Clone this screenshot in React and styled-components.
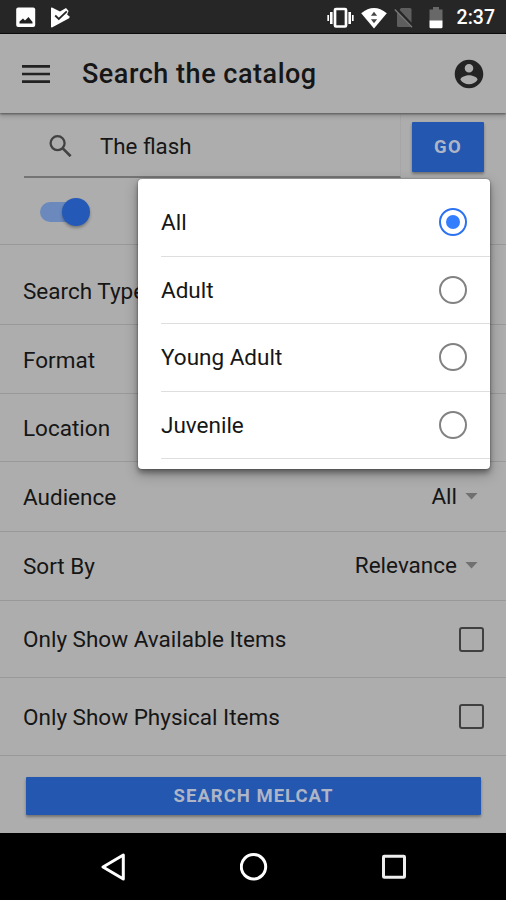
import React from "react";
import styled, { createGlobalStyle } from "styled-components";

const GlobalStyle = createGlobalStyle`
  * { box-sizing: border-box; }
  html, body { margin: 0; padding: 0; background: #000; overflow: hidden; }
  svg { display: block; flex: none; }
  button { font: inherit; border: 0; padding: 0; }
`;

const Screen = styled.div`
  position: relative;
  width: 506px;
  height: 900px;
  display: flex;
  flex-direction: column;
  background: #adadad;
  color: #161616;
  font-family: Roboto, "Liberation Sans", sans-serif;
  overflow: hidden;
`;

const StatusBar = styled.div`
  flex: none;
  height: 34px;
  display: flex;
  align-items: center;
  justify-content: space-between;
  background: #262626;
  border-bottom: 1px solid #080808;
  padding: 2px 11px 0 15px;
`;

const StatusGroup = styled.div`
  display: flex;
  align-items: center;
  gap: ${(p) => p.$gap}px;
`;

const Clock = styled.span`
  color: #fff;
  font-size: 19.5px;
  line-height: 22px;
  font-weight: 500;
  padding-top: 1px;
`;

const Header = styled.header`
  position: relative;
  flex: none;
  height: 79px;
  display: flex;
  align-items: center;
  padding: 0 22px 0 22px;
  background: #adadad;
  box-shadow: 0 1px 2px #555, 0 3px 5px rgba(0, 0, 0, 0.18);
`;

const Title = styled.h1`
  flex: 1;
  margin: 1px 0 0 32px;
  font-size: 27px;
  line-height: 34px;
  font-weight: 500;
  letter-spacing: 0.52px;
`;

const SearchRow = styled.div`
  flex: none;
  height: 65px;
  display: flex;
  align-items: flex-start;
  justify-content: space-between;
  padding: 0 22px 0 24px;
`;

const SearchField = styled.div`
  width: 377px;
  height: 65px;
  display: flex;
  align-items: center;
  gap: 28px;
  padding: 2px 0 0 25px;
  border-bottom: 2px solid #747474;
  border-right: 1px solid #a6a6a6;
`;

const Label = styled.span`
  font-size: ${(p) => p.$size || 22.5}px;
  line-height: 28px;
  letter-spacing: 0;
  white-space: nowrap;
`;

const ActionButton = styled.button`
  flex: none;
  width: ${(p) => p.$width}px;
  height: ${(p) => p.$height}px;
  margin-top: ${(p) => p.$top}px;
  background: #2457b0;
  color: #adb5c6;
  font-size: 18.5px;
  line-height: 24px;
  font-weight: 700;
  letter-spacing: ${(p) => p.$spacing}px;
  border-radius: 1px;
  box-shadow: 0 2px 3px rgba(0, 0, 0, 0.35);
`;

const ToggleRow = styled.div`
  flex: none;
  height: 67px;
  padding: 24px 0 0 40px;
  border-bottom: 1px solid #999;
`;

const ToggleTrack = styled.div`
  width: 50px;
  height: 20px;
  display: flex;
  align-items: center;
  justify-content: flex-end;
  border-radius: 10px;
  background: linear-gradient(90deg, #6b89bd 40px, transparent 40px);
`;

const ToggleKnob = styled.div`
  flex: none;
  width: 28px;
  height: 28px;
  border-radius: 50%;
  background: #2459b8;
  box-shadow: 0 2px 3px rgba(0, 0, 0, 0.3);
`;

const OptionRow = styled.div`
  flex: none;
  height: ${(p) => p.$height}px;
  display: flex;
  align-items: center;
  justify-content: space-between;
  padding: ${(p) => p.$top || 0}px 22px 0 23px;
  border-bottom: 1px solid #999;
`;

const SelectValue = styled.div`
  display: flex;
  align-items: center;
  gap: 8px;
  padding-right: 6px;
  margin-top: -2px;
`;

const Caret = styled.i`
  width: 13px;
  height: 7px;
  background: #707070;
  clip-path: polygon(0 0, 100% 0, 50% 100%);
`;

const Checkbox = styled.div`
  width: 25px;
  height: 25px;
  border: 2px solid #404040;
  border-radius: 3px;
`;

const Footer = styled.div`
  flex: 1;
  display: flex;
  justify-content: center;
  align-items: flex-start;
  padding-left: 1px;
`;

const NavBar = styled.nav`
  flex: none;
  height: 67px;
  display: flex;
  align-items: center;
  justify-content: space-between;
  padding: 0 98px 0 99px;
  background: #000;
`;

const Menu = styled.div`
  position: absolute;
  left: 138px;
  top: 179px;
  width: 352px;
  height: 290px;
  padding: 10px 0 0 23px;
  border-radius: 4px;
  background: #fff;
  box-shadow: 0 0 2px rgba(0, 0, 0, 0.4), 0 4px 5px rgba(0, 0, 0, 0.3), 0 5px 14px rgba(0, 0, 0, 0.28);
`;

const MenuItem = styled.div`
  height: 67.5px;
  display: flex;
  align-items: center;
  justify-content: space-between;
  padding-right: 23px;
  border-bottom: 1.5px solid #dedede;
`;

const Radio = styled.div`
  width: 28px;
  height: 28px;
  display: flex;
  align-items: center;
  justify-content: center;
  border: 2px solid ${(p) => (p.$checked ? "#2b72f2" : "#828282")};
  border-radius: 50%;

  &::after {
    content: "";
    width: 14px;
    height: 14px;
    border-radius: 50%;
    background: ${(p) => (p.$checked ? "#327eff" : "transparent")};
  }
`;

const PictureIcon = () => (
  <svg width="21" height="21" viewBox="0 0 21 21">
    <rect x="1.2" y=".5" width="19" height="19.5" rx="2" fill="#fff" />
    <path d="M4.500 16.500V14.500L8 11.500l2 2L13.500 10l4 5v1.500z" fill="#222" />
  </svg>
);

const PlayCheckIcon = () => (
  <svg width="21" height="21" viewBox="0 0 21 21">
    <path d="M1 1.2Q1 .2 2 .6L10 4.6 16 1l2.600 3-1.500 3.600 2.700 2.200-.7 1.500L2.400 20.300Q1 21 1 19.500z" fill="#fff" />
    <path d="M5.200 8.500l3.600 3.500 8-7.600" fill="none" stroke="#262626" strokeWidth="1.800" />
  </svg>
);

const VibrateIcon = () => (
  <svg width="27" height="22" viewBox="0 0 27 22">
    <rect x="8" y="2" width="11" height="17.500" rx="1" fill="none" stroke="#fff" strokeWidth="2.700" />
    <path d="M4.300 5v12M22.700 5v12" stroke="#fff" strokeWidth="2.600" />
    <path d="M1.200 8v6M25.800 8v6" stroke="#fff" strokeWidth="1.700" />
  </svg>
);

const WifiIcon = () => (
  <svg width="26" height="22" viewBox="0 0 26 22">
    <path d="M.2 6.200Q13-4.400 25.800 6.200L13 21.500z" fill="#fff" />
    <path d="M13 4.800l3.100 4H9.900zM13 16.300l3.100-4H9.900z" fill="#444" />
  </svg>
);

const NoSimIcon = () => (
  <svg width="20" height="21" viewBox="0 0 20 21">
    <path d="M7 1h9q1.500 0 1.500 1.500v16q0 1.500-1.500 1.500H4.500Q3 20 3 18.500V6z" fill="#5e5e5e" />
    <path d="M1.800 1.500l17.500 18.500" stroke="#262626" strokeWidth="3.400" />
    <path d="M.8 2.600L18 20.200" stroke="#777" strokeWidth="1.500" />
  </svg>
);

const BatteryIcon = () => (
  <svg width="14" height="22" viewBox="0 0 14 22">
    <path d="M4 0h6v2.500h3.500V14H.5V2.500H4z" fill="#686868" />
    <path d="M.5 13.500h13V20q0 1.300-1.300 1.300H1.800Q.5 21.300.5 20z" fill="#fff" />
  </svg>
);

const MenuIcon = () => (
  <svg width="28" height="20" viewBox="0 0 28 20">
    <path d="M0 2.300h28M0 10h28M0 17.700h28" stroke="#222" strokeWidth="2.700" />
  </svg>
);

const AccountIcon = () => (
  <svg width="30" height="30" viewBox="1.5 1.5 21 21">
    <path
      fill="#242424"
      d="M12 2C6.480 2 2 6.480 2 12s4.480 10 10 10 10-4.480 10-10S17.520 2 12 2zm0 3c1.660 0 3 1.340 3 3s-1.340 3-3 3-3-1.340-3-3 1.340-3 3-3zm0 14.200c-2.500 0-4.710-1.280-6-3.220.030-1.990 4-3.080 6-3.080 1.990 0 5.970 1.090 6 3.080-1.290 1.940-3.500 3.220-6 3.220z"
    />
  </svg>
);

const SearchIcon = () => (
  <svg width="23" height="23" viewBox="0 0 23 23" fill="none" stroke="#424242">
    <circle cx="8.600" cy="9.200" r="7" strokeWidth="2.300" />
    <path d="M13.800 14.400l7.800 7.800" strokeWidth="2.700" />
  </svg>
);

const BackIcon = () => (
  <svg width="28" height="28" viewBox="0 0 28 28">
    <path d="M24.300 2v24L4 14z" fill="none" stroke="#fff" strokeWidth="3" strokeLinejoin="round" />
  </svg>
);

const HomeIcon = () => (
  <svg width="28" height="28" viewBox="0 0 28 28">
    <circle cx="13.500" cy="13.700" r="12.200" fill="none" stroke="#fff" strokeWidth="3" />
  </svg>
);

const RecentIcon = () => (
  <svg width="28" height="28" viewBox="0 0 28 28">
    <rect x="3.500" y="3.200" width="21" height="21" rx=".8" fill="none" stroke="#eee" strokeWidth="3" />
  </svg>
);

const selects = [
  { label: "Search Type", height: 80, top: 13 },
  { label: "Format", height: 69, top: 1 },
  { label: "Location", height: 68, top: 1 },
  { label: "Audience", height: 70, top: 1, value: "All" },
  { label: "Sort By", height: 69, value: "Relevance" },
];

const checks = [
  { label: "Only Show Available Items", height: 77 },
  { label: "Only Show Physical Items", height: 78 },
];

const audiences = ["All", "Adult", "Young Adult", "Juvenile"];

export default function App() {
  return (
    <>
      <GlobalStyle />
      <Screen>
        <StatusBar>
          <StatusGroup $gap={14}>
            <PictureIcon />
            <PlayCheckIcon />
          </StatusGroup>
          <StatusGroup $gap={15}>
            <StatusGroup $gap={7}>
              <VibrateIcon />
              <WifiIcon />
              <NoSimIcon />
            </StatusGroup>
            <StatusGroup $gap={14}>
              <BatteryIcon />
              <Clock>2:37</Clock>
            </StatusGroup>
          </StatusGroup>
        </StatusBar>
        <Header>
          <MenuIcon />
          <Title>Search the catalog</Title>
          <AccountIcon />
        </Header>
        <SearchRow>
          <SearchField>
            <SearchIcon />
            <Label $size={22.3}>The flash</Label>
          </SearchField>
          <ActionButton $width={72} $height={50} $top={9} $spacing={1.3}>GO</ActionButton>
        </SearchRow>
        <ToggleRow>
          <ToggleTrack>
            <ToggleKnob />
          </ToggleTrack>
        </ToggleRow>
        {selects.map((s) => (
          <OptionRow key={s.label} $height={s.height} $top={s.top}>
            <Label>{s.label}</Label>
            {s.value && (
              <SelectValue>
                <Label>{s.value}</Label>
                <Caret />
              </SelectValue>
            )}
          </OptionRow>
        ))}
        {checks.map((c) => (
          <OptionRow key={c.label} $height={c.height}>
            <Label>{c.label}</Label>
            <Checkbox />
          </OptionRow>
        ))}
        <Footer>
          <ActionButton $width={455} $height={38} $top={21} $spacing={1}>SEARCH MELCAT</ActionButton>
        </Footer>
        <NavBar>
          <BackIcon />
          <HomeIcon />
          <RecentIcon />
        </NavBar>
        <Menu>
          {audiences.map((name, i) => (
            <MenuItem key={name}>
              <Label>{name}</Label>
              <Radio $checked={i === 0} />
            </MenuItem>
          ))}
        </Menu>
      </Screen>
    </>
  );
}
